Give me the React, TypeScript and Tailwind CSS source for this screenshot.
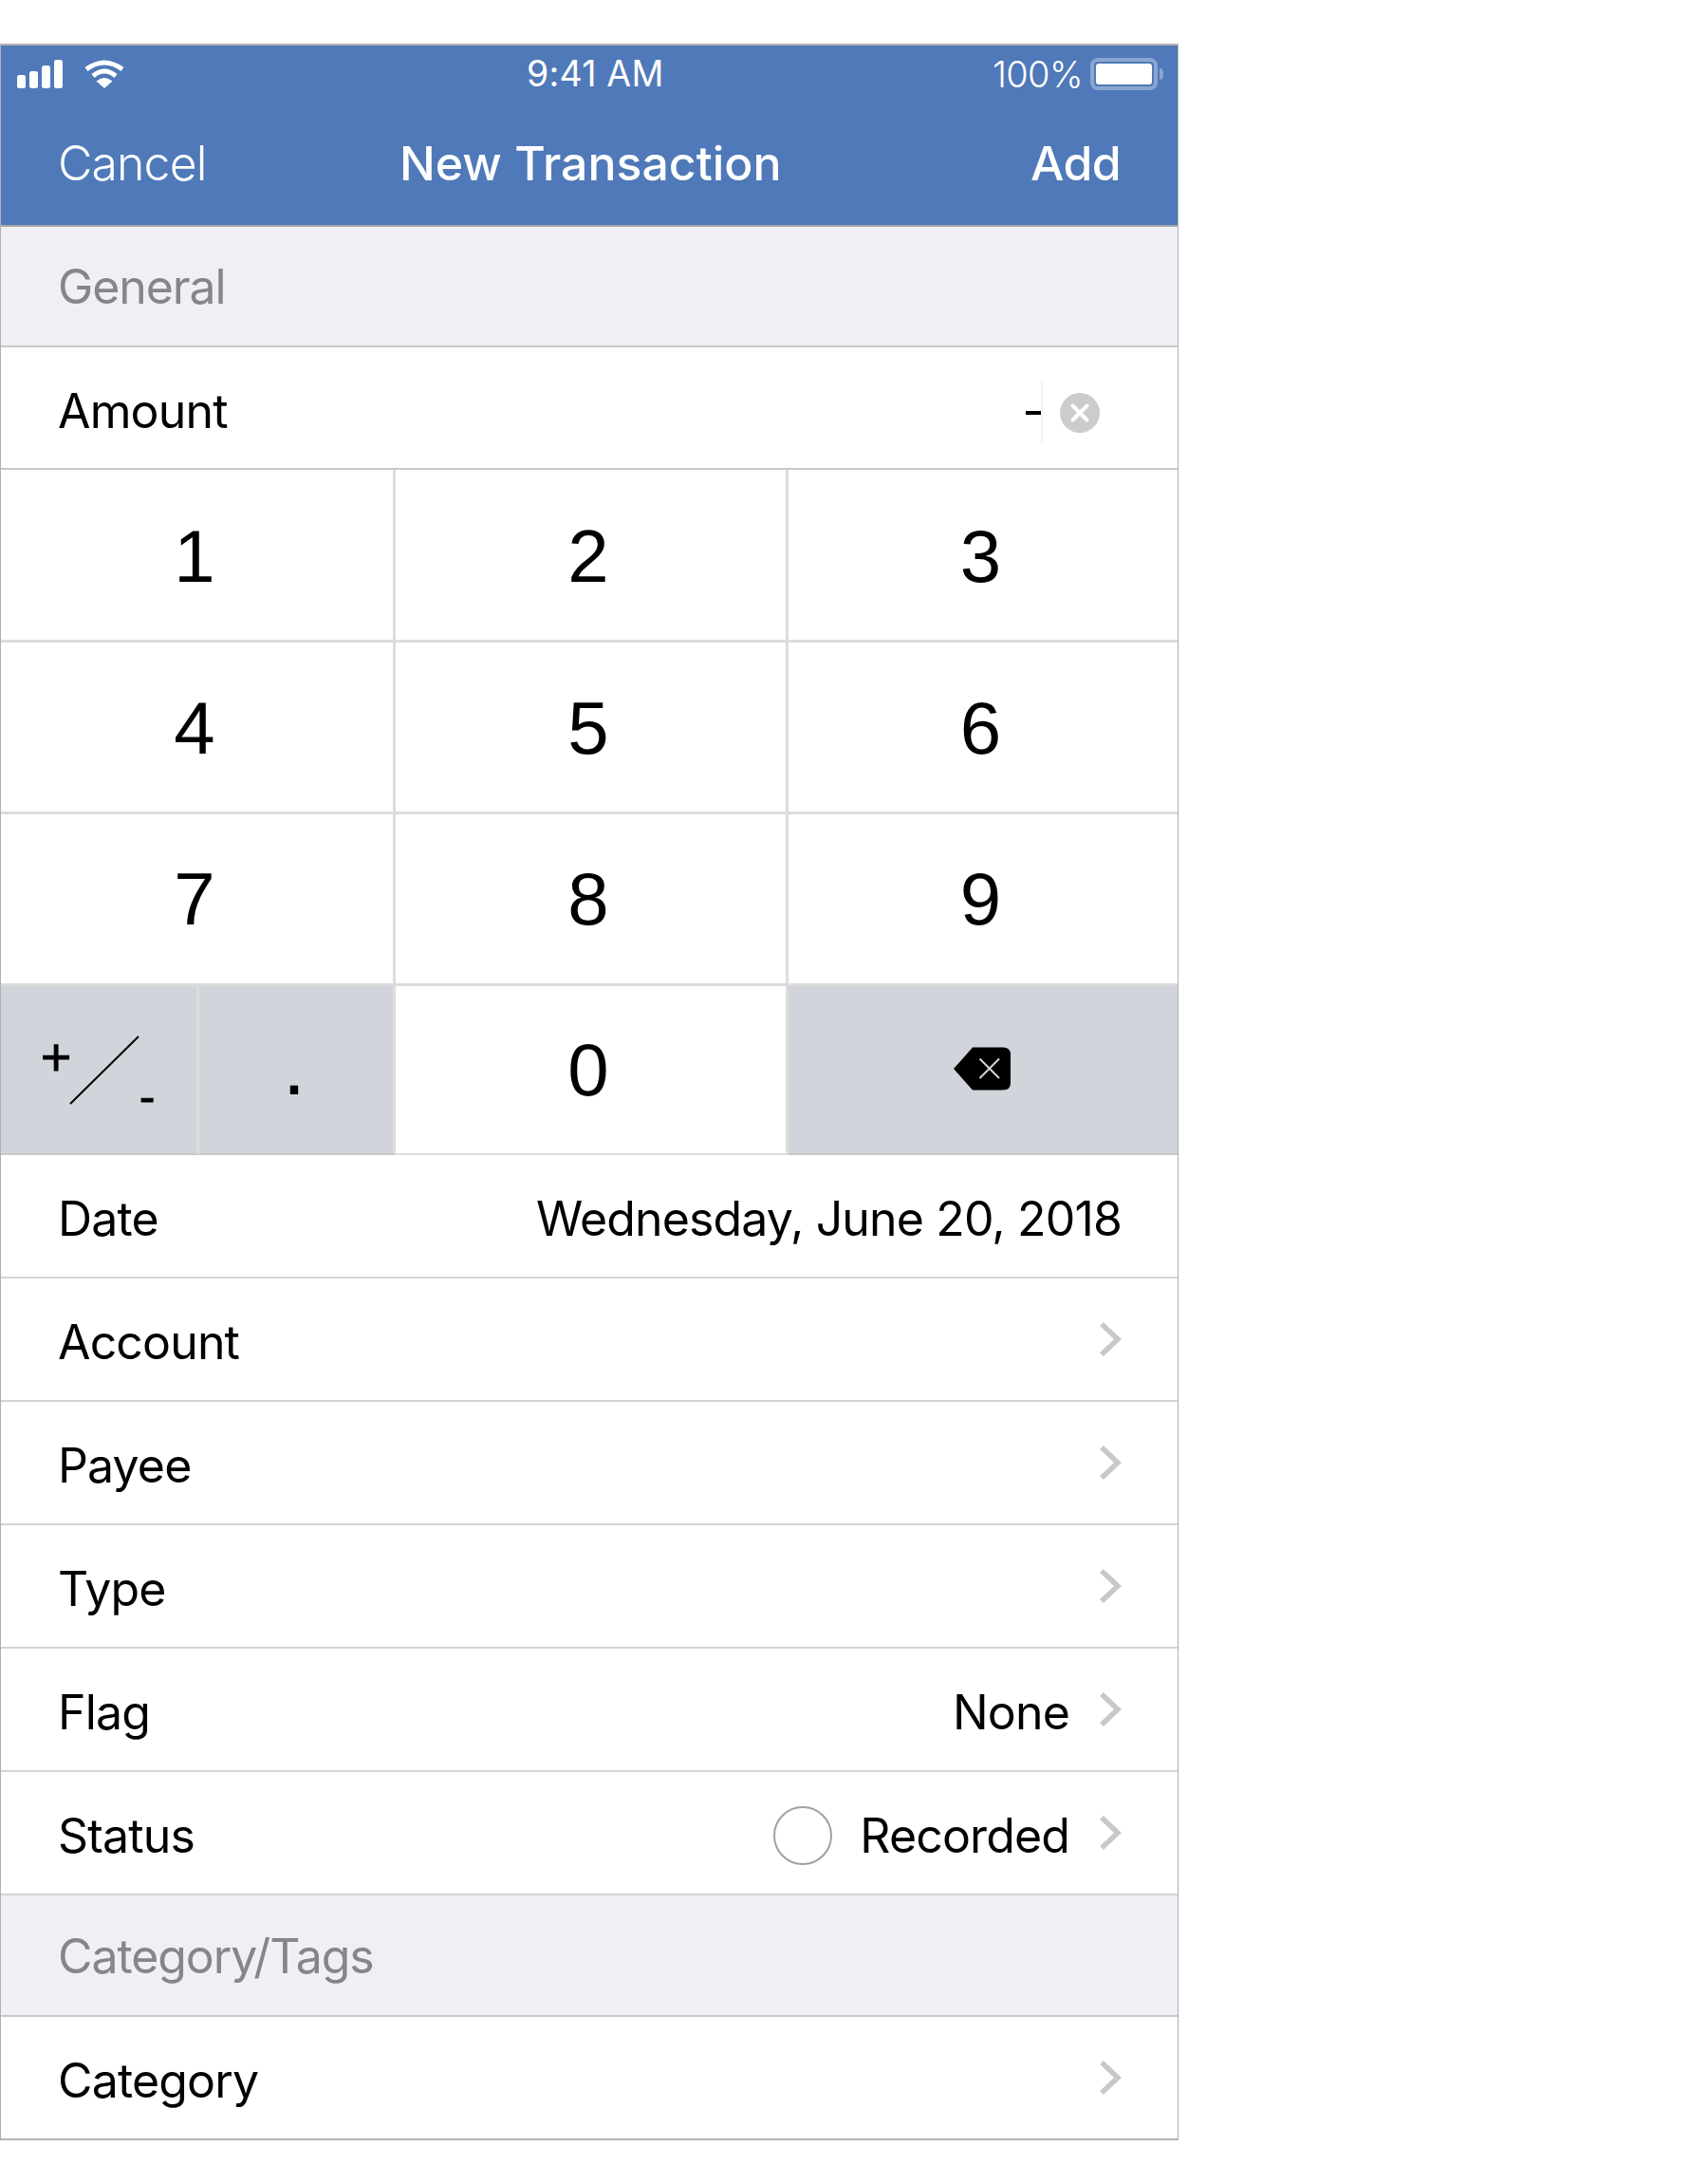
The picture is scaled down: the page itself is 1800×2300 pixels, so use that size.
import React from 'react';

const Chevron = () => (
    <svg width="24" height="38" viewBox="0 0 24 38" className="shrink-0">
        <path d="M3 3 L20 19 L3 35" fill="none" stroke="#c7c7cc" strokeWidth="5.5" />
    </svg>
);

const Section = ({ title, h }: { title: string; h: string }) => (
    <div className={`${h} flex items-center bg-[#efeff4] border-b-2 border-[#c8c7cc] pl-[60px] pt-[2px] text-[50px] text-[#85858b] tracking-[-1.1px]`}>
        {title}
    </div>
);

const Row = ({ label, children, last }: { label: string; children?: React.ReactNode; last?: boolean }) => (
    <div className={`h-[130px] flex items-center justify-between pl-[60px] pr-[59px] border-b-2 ${last ? 'border-[#b5b5b5]' : 'border-[#d4d4d6]'} text-[50px] text-black tracking-[-0.85px]`}>
        <span className="mt-[6px]">{label}</span>
        <div className="flex items-center">{children}</div>
    </div>
);

const Key = ({ value, h, right }: { value: string; h: string; right?: boolean }) => (
    <div className={`${h} flex items-center justify-center pr-[5px] border-b-[3px] border-[#dcdcdc] ${right ? '' : 'border-r-[3px]'} font-['Liberation_Sans',sans-serif] text-[78px] text-black`}>
        {value}
    </div>
);

const PlusMinus = () => (
    <svg width="206" height="177" viewBox="0 0 206 177" className="block">
        <text x="58" y="94" textAnchor="middle" fontSize="56" fontFamily="Liberation Sans, sans-serif" fill="#000" stroke="#000" strokeWidth="0.8">+</text>
        <line x1="73" y1="124" x2="145" y2="53" stroke="#000" strokeWidth="2" />
        <text x="154" y="133" textAnchor="middle" fontSize="50" fontFamily="Liberation Sans, sans-serif" fill="#000" stroke="#000" strokeWidth="0.8">-</text>
    </svg>
);

const Backspace = () => (
    <svg width="60" height="46" viewBox="0 0 60 46">
        <path d="M20 0.5 H52 Q60 0.5 60 8 V38 Q60 45.5 52 45.5 H20 L0 23 Z" fill="#000" />
        <path d="M27.5 12.5 L48 33 M48 12.5 L27.5 33" stroke="#d1d4db" strokeWidth="2" />
    </svg>
);

export default function App() {
    return (
        <div className="bg-white h-[2300px] w-[1800px] pt-[46px] font-['Inter',sans-serif]">
            <div className="w-[1242px] border-t-2 border-x-[1.5px] border-[#b0b0b3]">
                {/* nav */}
                <div className="h-[191px] bg-[#4f79b8] text-white border-b-2 border-[#a8a8ab]">
                    <div className="h-[60px] pb-[1px] flex items-center justify-between relative">
                        <div className="flex items-center gap-[23px] pl-[17px]">
                            <svg width="48" height="30" viewBox="0 0 48 30" fill="#fff">
                                <rect x="0" y="16" width="9" height="14" rx="2.5" />
                                <rect x="13" y="12" width="9" height="18" rx="2.5" />
                                <rect x="26" y="6" width="9" height="24" rx="2.5" />
                                <rect x="39" y="0" width="9" height="30" rx="2.5" />
                            </svg>
                            <svg width="42" height="30" viewBox="0 0 42 30" fill="none" stroke="#fff" strokeWidth="5">
                                <path d="M2 10 Q21 -4 40 10" />
                                <path d="M9 17 Q21 7 33 17" />
                                <path d="M21 30 L12.5 22.5 Q21 15.5 29.5 22.5 Z" fill="#fff" stroke="none" />
                            </svg>
                        </div>
                        <div className="absolute left-[554px] text-[37.5px] tracking-[0.2px] leading-none">9:41 AM</div>
                        <div className="flex items-center pr-[15px]">
                            <span className="text-[38px] font-light tracking-[-0.6px] leading-none mr-[8px]">100%</span>
                            <div className="w-[71px] h-[34px] border-[4px] border-[#8aa6d0] rounded-[8px] p-[2px]">
                                <div className="w-full h-full bg-white rounded-[3px]" />
                            </div>
                            <div className="w-[4px] h-[12px] bg-[#8aa6d0] rounded-r-full ml-[2px]" />
                        </div>
                    </div>
                    <div className="h-[129px] flex items-center justify-between pl-[60px] pr-[60px] pb-[1px] text-[50px] relative">
                        <span className="font-light tracking-[-0.9px]">Cancel</span>
                        <span className="absolute left-[420px] font-medium">New Transaction</span>
                        <span className="font-medium tracking-[-0.6px]">Add</span>
                    </div>
                </div>

                <Section title="General" h="h-[127px]" />

                <div className="h-[129px] flex items-center justify-between pl-[60px] pr-[82px] border-b-2 border-[#c8c7cc] text-[50px] tracking-[-0.85px]">
                    <span className="mt-[8px]">Amount</span>
                    <div className="flex items-center mt-[10px]">
                        <span className="w-[16px] h-[4px] bg-black" />
                        <span className="w-[2px] h-[66px] bg-[#f3f4f8] mr-[18px]" />
                        <svg width="42" height="42" viewBox="0 0 42 42">
                            <circle cx="21" cy="21" r="21" fill="#cccccc" />
                            <path d="M13.5 13.5 L28.5 28.5 M28.5 13.5 L13.5 28.5" stroke="#fff" strokeWidth="4" strokeLinecap="round" />
                        </svg>
                    </div>
                </div>

                {/* keypad */}
                <div className="grid grid-cols-[416px_414px_1fr]">
                    <Key value="1" h="h-[182px] pt-[3px]" />
                    <Key value="2" h="h-[182px] pt-[3px]" />
                    <Key value="3" h="h-[182px] pt-[3px]" right />
                    <Key value="4" h="h-[181px] pt-[2px]" />
                    <Key value="5" h="h-[181px] pt-[2px]" />
                    <Key value="6" h="h-[181px] pt-[2px]" right />
                    <Key value="7" h="h-[181px]" />
                    <Key value="8" h="h-[181px]" />
                    <Key value="9" h="h-[181px]" right />
                    <div className="h-[178px] grid grid-cols-[209px_1fr] bg-[#d1d4db] border-b-2 border-[#c8c7cc] border-r-[3px] border-r-[#dcdcdc]">
                        <div className="border-r-[3px] border-[#dcdcdc]">
                            <PlusMinus />
                        </div>
                        <div className="flex items-center justify-center pr-[4px] font-['Liberation_Sans',sans-serif] text-[88px] leading-none pb-[10px]">.</div>
                    </div>
                    <div className="h-[178px] flex items-center justify-center pr-[5px] border-b-2 border-[#c8c7cc] border-r-[3px] border-[#dcdcdc] font-['Liberation_Sans',sans-serif] text-[78px]">0</div>
                    <div className="h-[178px] flex items-center justify-center pr-[3px] pb-[3px] bg-[#d1d4db] border-b-2 border-[#c8c7cc]">
                        <Backspace />
                    </div>
                </div>

                <Row label="Date"><span className="mt-[6px]">Wednesday, June 20, 2018</span></Row>
                <Row label="Account"><Chevron /></Row>
                <Row label="Payee"><Chevron /></Row>
                <Row label="Type"><Chevron /></Row>
                <Row label="Flag">
                    <span className="mt-[6px] mr-[31px]">None</span>
                    <Chevron />
                </Row>
                <Row label="Status">
                    <span className="mt-[6px] w-[62px] h-[62px] rounded-full border-2 border-[#a0a0a0] mr-[29px]" />
                    <span className="mt-[6px] mr-[31px]">Recorded</span>
                    <Chevron />
                </Row>
                <Section title="Category/Tags" h="h-[128px]" />
                <Row label="Category" last><Chevron /></Row>
            </div>
        </div>
    );
}
